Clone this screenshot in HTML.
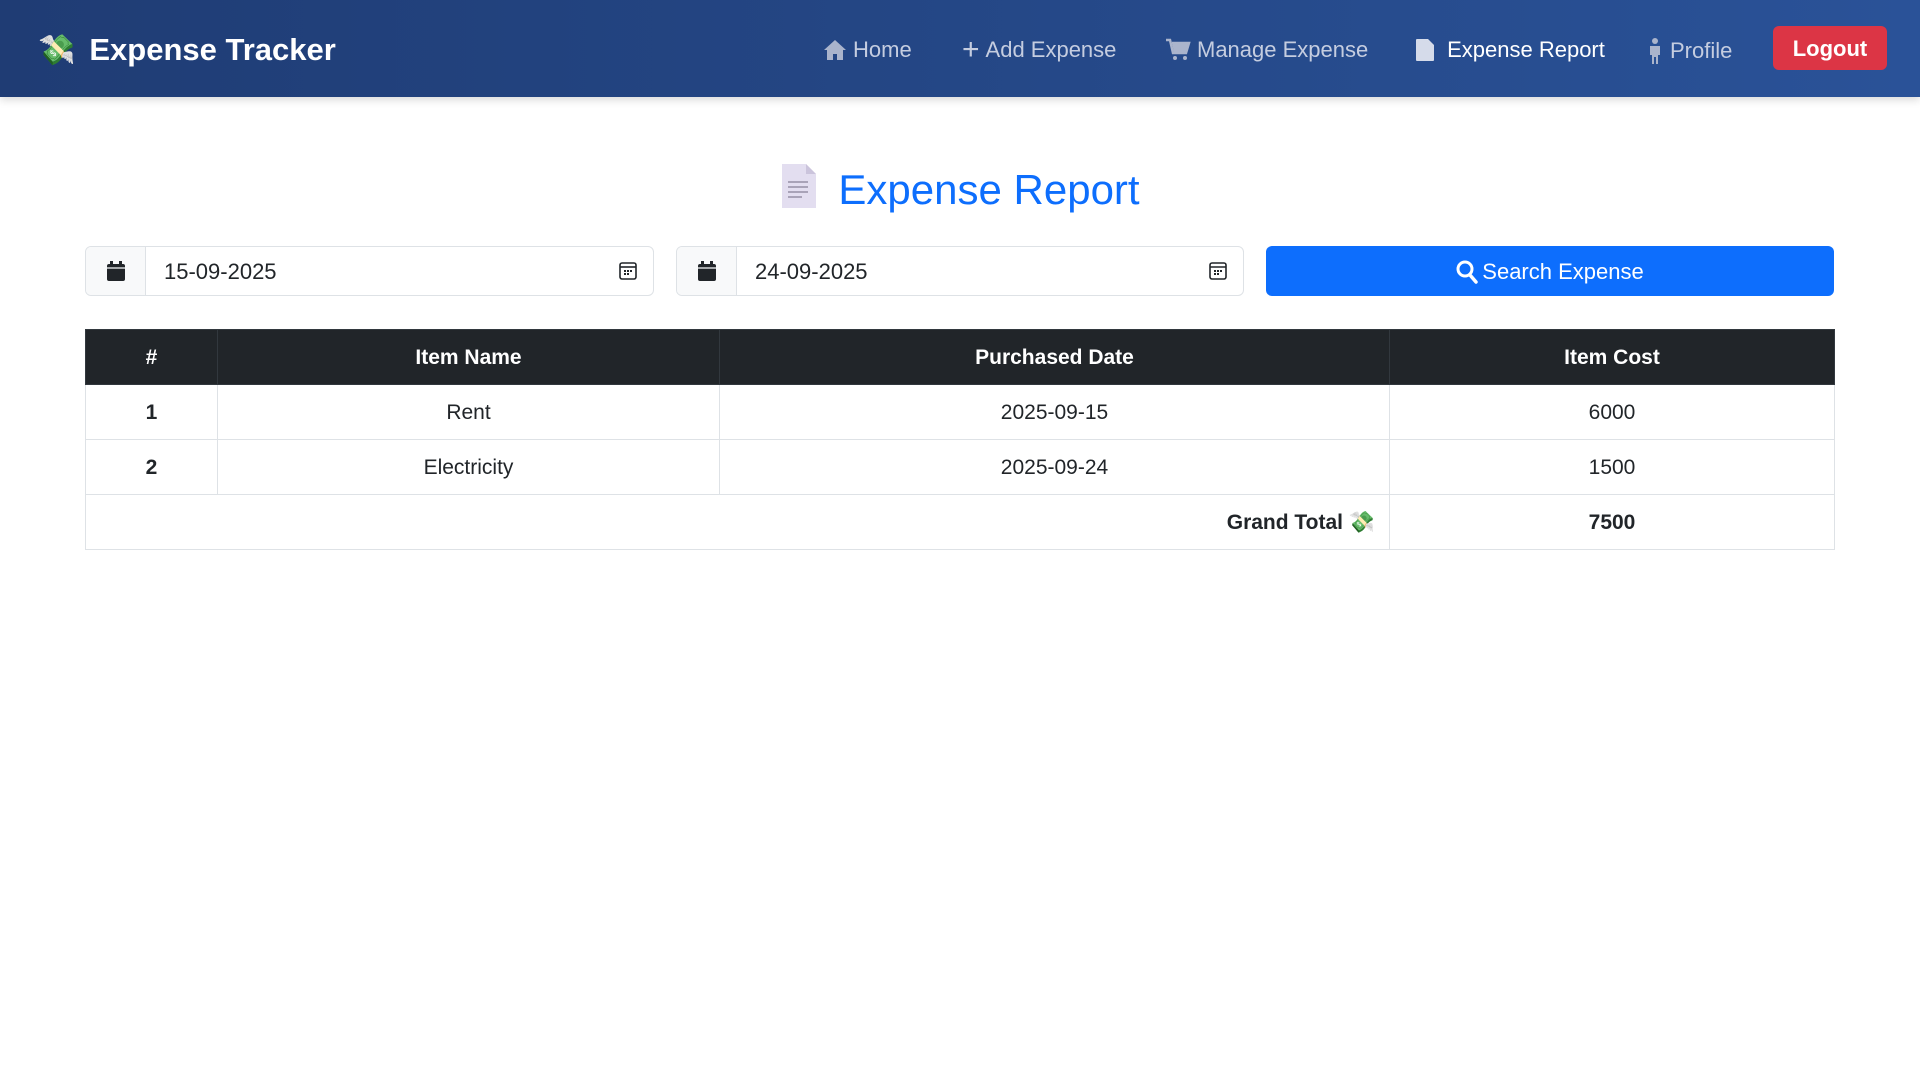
<!DOCTYPE html>
<html><head><meta charset="utf-8"><style>
*{box-sizing:border-box;margin:0;padding:0}
body{width:1920px;height:1080px;background:#fff;font-family:"Liberation Sans",sans-serif;color:#212529;position:relative;overflow:hidden}
.nav{position:absolute;left:0;top:0;width:1920px;height:97px;background:linear-gradient(90deg,#1f3c74,#2a5298);box-shadow:0 3px 8px rgba(0,0,0,.15)}
.brand{position:absolute;left:38px;top:32px;color:#fff;font-weight:bold;font-size:31px;display:flex;align-items:center;gap:14px}
.links{position:absolute;top:37px;font-size:22px;color:#c5cde0}
.link{position:absolute;white-space:nowrap;display:flex;align-items:center;gap:6px}
.logout{position:absolute;left:1773px;top:26px;width:114px;height:44px;background:#dc3545;color:#fff;border-radius:6px;font-size:22px;font-weight:bold;display:flex;align-items:center;justify-content:center;padding-top:2px}
h1{position:absolute;left:0;width:1920px;top:164px;text-align:center;color:#0d6efd;font-weight:normal;font-size:42px}
.ig{position:absolute;top:246px;height:50px;border:1px solid #dee2e6;border-radius:6px;display:flex;overflow:hidden}
.ig .pre{width:60px;background:#f8f9fa;border-right:1px solid #dee2e6;display:flex;align-items:center;justify-content:center}
.ig .val{flex:1;display:flex;align-items:center;padding-left:18px;font-size:22px;padding-top:2px}
.ig .cal{width:50px;display:flex;align-items:center;justify-content:center}
.btn{position:absolute;left:1266px;top:246px;width:568px;height:50px;background:#0d6efd;border-radius:6px;color:#fff;font-size:22px;display:flex;align-items:center;justify-content:center;gap:4px;padding-top:2px}
table{position:absolute;left:85px;top:329px;width:1750px;border-collapse:collapse;font-size:21px}
td,th{border:1px solid #dee2e6;height:55px;text-align:center;padding-top:2px}
th{background:#212529;color:#fff;border-color:#32383e}
</style></head><body>
<div class="nav">
 <div class="brand"><span style="font-size:30px">💸</span>Expense Tracker</div>
 <div class="links">
  <div class="link" style="left:823px"><svg width="24" height="24" viewBox="0 0 24 24"><path d="M12 2L1 12h3v10h6v-6h4v6h6V12h3z" fill="#aab4cc"/></svg>Home</div>
  <div class="link" style="left:962px"><span style="font-size:30px;line-height:22px">+</span>Add Expense</div>
  <div class="link" style="left:1165px"><svg width="26" height="24" viewBox="0 0 26 24"><path d="M1 2h4l3 13h13l3-10H7" fill="none" stroke="#aab4cc" stroke-width="2.5"/><path d="M7 5h17l-3 10H9z" fill="#aab4cc"/><circle cx="10" cy="20" r="2" fill="#aab4cc"/><circle cx="20" cy="20" r="2" fill="#aab4cc"/></svg>Manage Expense</div>
  <div class="link" style="left:1415px;color:#fff"><svg width="20" height="24" viewBox="0 0 20 24"><path d="M2 1h11l6 6v15a1 1 0 0 1-1 1H2a1 1 0 0 1-1-1V2a1 1 0 0 1 1-1z" fill="#d5dbea"/></svg>&nbsp;Expense Report</div>
  <div class="link" style="left:1646px"><svg width="18" height="28" viewBox="0 0 18 28"><circle cx="9" cy="4" r="3" fill="#aab4cc"/><path d="M4 9h10v9h-2v9H10v-7H8v7H6v-9H4z" fill="#aab4cc"/></svg>Profile</div>
 </div>
 <div class="logout">Logout</div>
</div>
<h1><svg width="36" height="44" viewBox="0 0 36 44" style="vertical-align:-4px;margin-right:22px"><path d="M2 0h24l10 10v34H2z" fill="#e3def0"/><path d="M26 0v10h10z" fill="#cbc4dc"/><g stroke="#a9a3b8" stroke-width="2"><line x1="8" y1="18" x2="28" y2="18"/><line x1="8" y1="23" x2="28" y2="23"/><line x1="8" y1="28" x2="28" y2="28"/><line x1="8" y1="33" x2="22" y2="33"/></g></svg>Expense Report</h1>
<div class="ig" style="left:85px;width:569px"><div class="pre"><svg width="20" height="22" viewBox="0 0 20 22"><rect x="1" y="4" width="18" height="17" rx="2" fill="#212529"/><rect x="4" y="1" width="3" height="5" fill="#212529"/><rect x="13" y="1" width="3" height="5" fill="#212529"/><line x1="1" y1="8" x2="19" y2="8" stroke="#f8f9fa" stroke-width="1.2"/></svg></div><div class="val">15-09-2025</div><div class="cal"><svg width="20" height="20" viewBox="0 0 20 20"><rect x="2" y="2" width="16" height="16" rx="2" fill="none" stroke="#212529" stroke-width="1.6"/><line x1="2" y1="6" x2="18" y2="6" stroke="#212529" stroke-width="1.6"/><g fill="#212529"><rect x="6" y="9" width="2" height="2"/><rect x="9" y="9" width="2" height="2"/><rect x="12" y="9" width="2" height="2"/><rect x="6" y="12" width="2" height="2"/><rect x="9" y="12" width="2" height="2"/></g></svg></div></div>
<div class="ig" style="left:676px;width:568px"><div class="pre"><svg width="20" height="22" viewBox="0 0 20 22"><rect x="1" y="4" width="18" height="17" rx="2" fill="#212529"/><rect x="4" y="1" width="3" height="5" fill="#212529"/><rect x="13" y="1" width="3" height="5" fill="#212529"/><line x1="1" y1="8" x2="19" y2="8" stroke="#f8f9fa" stroke-width="1.2"/></svg></div><div class="val">24-09-2025</div><div class="cal"><svg width="20" height="20" viewBox="0 0 20 20"><rect x="2" y="2" width="16" height="16" rx="2" fill="none" stroke="#212529" stroke-width="1.6"/><line x1="2" y1="6" x2="18" y2="6" stroke="#212529" stroke-width="1.6"/><g fill="#212529"><rect x="6" y="9" width="2" height="2"/><rect x="9" y="9" width="2" height="2"/><rect x="12" y="9" width="2" height="2"/><rect x="6" y="12" width="2" height="2"/><rect x="9" y="12" width="2" height="2"/></g></svg></div></div>
<div class="btn"><svg width="22" height="24" viewBox="0 0 22 24"><circle cx="9" cy="9" r="7" fill="none" stroke="#fff" stroke-width="3"/><line x1="14" y1="15" x2="20" y2="22" stroke="#fff" stroke-width="3.5" stroke-linecap="round"/></svg>Search Expense</div>
<table>
<tr><th style="width:132px">#</th><th style="width:502px">Item Name</th><th style="width:670px">Purchased Date</th><th>Item Cost</th></tr>
<tr><td><b>1</b></td><td>Rent</td><td>2025-09-15</td><td>6000</td></tr>
<tr><td><b>2</b></td><td>Electricity</td><td>2025-09-24</td><td>1500</td></tr>
<tr><td colspan="3" style="text-align:right;padding-right:14px"><b>Grand Total 💸</b></td><td><b>7500</b></td></tr>
</table>
</body></html>
